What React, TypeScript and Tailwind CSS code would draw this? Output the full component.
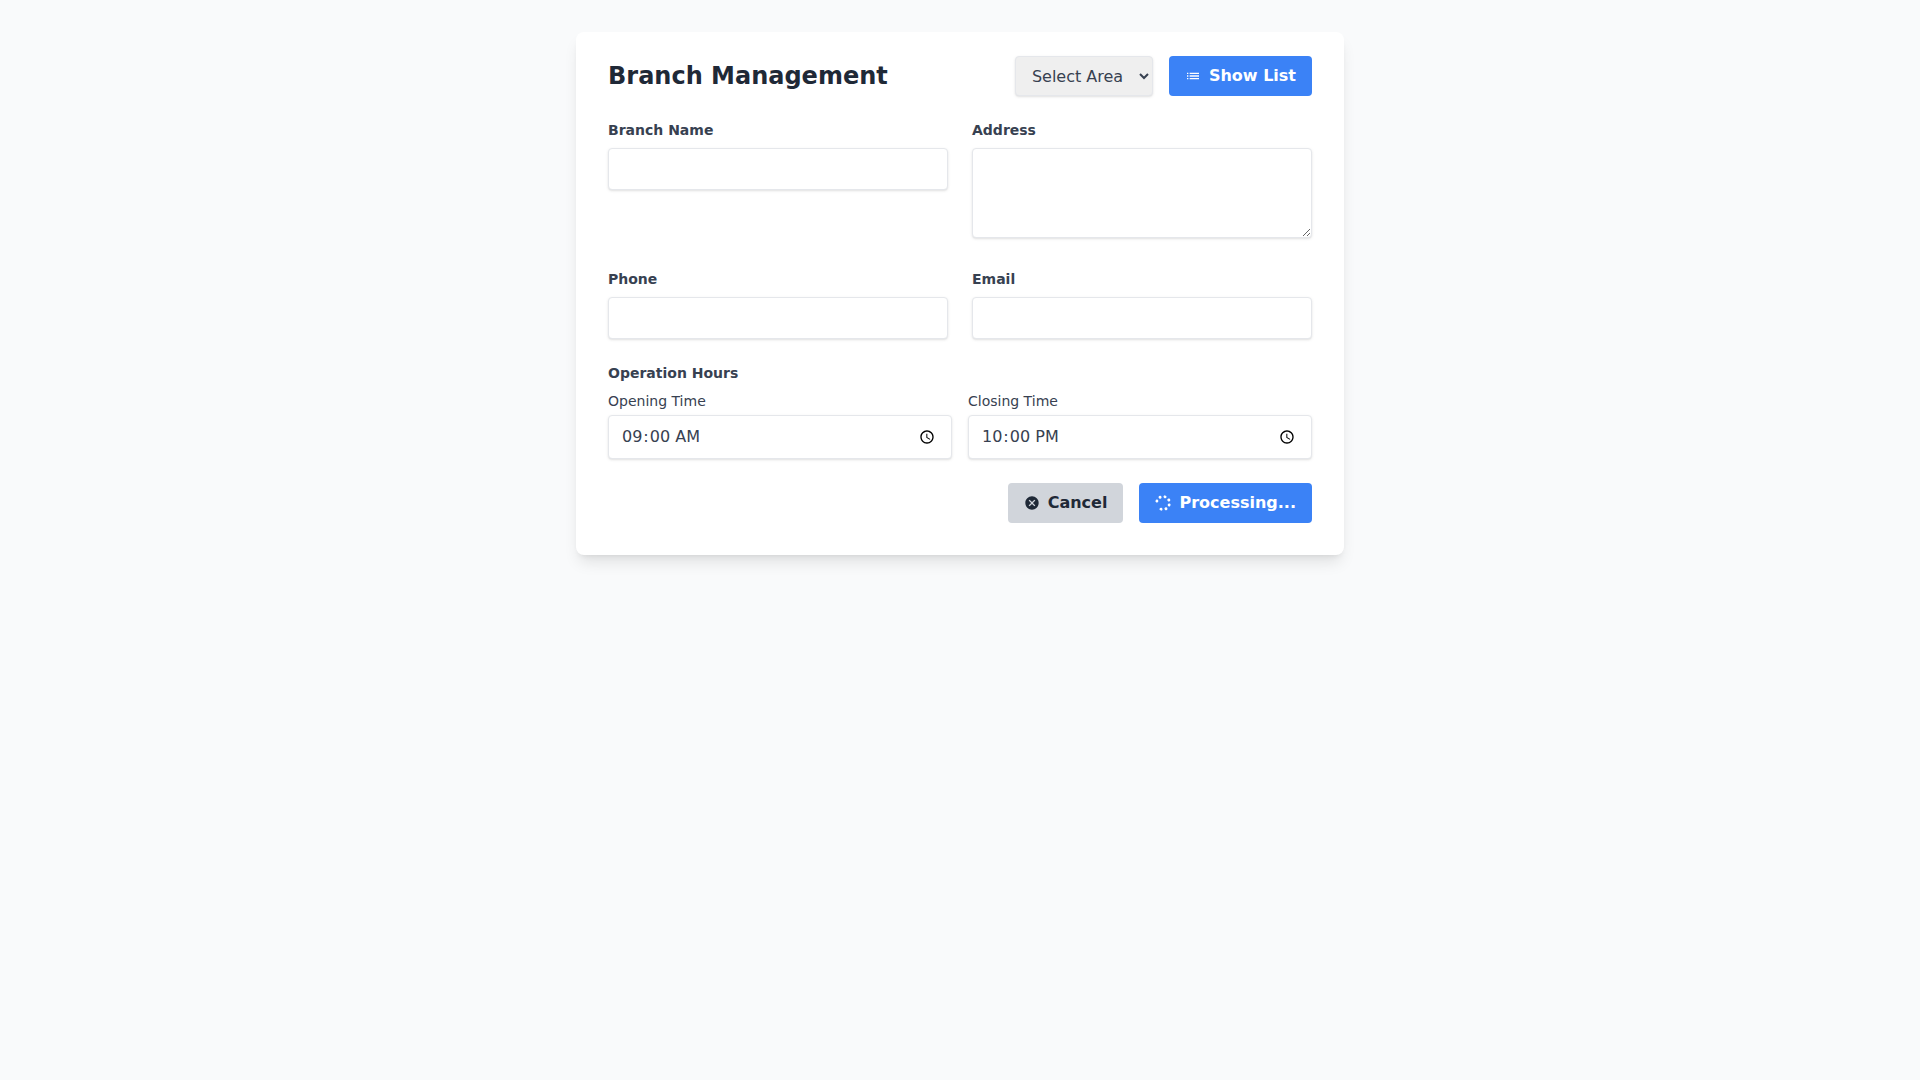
import React from "react";
import { FaSpinner } from "react-icons/fa";
import { MdCancel, MdList } from "react-icons/md";

const field =
  "shadow-sm border border-[#e5e7eb] rounded w-full py-2 px-3 text-[#374151] leading-6 bg-white";
const primaryButton = "flex items-center bg-[#3b82f6] text-white font-bold py-2 px-4 rounded";

function Field({ id, label, type }: { id: string; label: string; type: string }) {
  return (
    <div>
      <label htmlFor={id} className="block text-[#374151] text-sm font-bold mb-2">
        {label}
      </label>
      <input id={id} type={type} className={field} />
    </div>
  );
}

function TimeField({ id, label, value }: { id: string; label: string; value: string }) {
  return (
    <div className="flex-1">
      <label htmlFor={id} className="block text-[#374151] text-sm mb-1">
        {label}
      </label>
      <input id={id} type="time" defaultValue={value} className={`${field} block h-11`} />
    </div>
  );
}

export default function App() {
  return (
    <main className="min-h-screen bg-[#f9fafb] py-8 font-['DejaVu_Sans',sans-serif]">
      <section className="max-w-3xl mx-auto bg-white rounded-lg shadow-lg px-8 pt-6 pb-8">
        <header className="flex items-center justify-between mb-6">
          <h1 className="text-2xl font-bold text-[#1f2937]">Branch Management</h1>
          <div className="flex gap-4">
            <select
              aria-label="Select Area"
              className="shadow-sm border border-[#e5e7eb] rounded py-2 px-3 text-[#374151] leading-tight bg-[#efefef]"
            >
              <option>Select Area</option>
            </select>
            <button type="button" className={primaryButton}>
              <MdList className="mr-2" />
              Show List
            </button>
          </div>
        </header>
        <form>
          <div className="grid grid-cols-2 gap-6">
            <Field id="name" label="Branch Name" type="text" />
            <div>
              <label htmlFor="address" className="block text-[#374151] text-sm font-bold mb-2">
                Address
              </label>
              <textarea id="address" rows={3} className={field} />
            </div>
            <Field id="phone" label="Phone" type="tel" />
            <Field id="email" label="Email" type="email" />
          </div>
          <fieldset className="mt-6">
            <legend className="text-[#374151] text-sm font-bold mb-2">Operation Hours</legend>
            <div className="flex gap-4">
              <TimeField id="opening" label="Opening Time" value="09:00" />
              <TimeField id="closing" label="Closing Time" value="22:00" />
            </div>
          </fieldset>
          <div className="flex justify-end gap-4 mt-6">
            <button
              type="button"
              className="flex items-center bg-[#d1d5db] text-[#1f2937] font-bold py-2 px-4 rounded"
            >
              <MdCancel className="mr-2" />
              Cancel
            </button>
            <button type="button" className={primaryButton}>
              <FaSpinner className="mr-2 rotate-[198deg]" />
              Processing...
            </button>
          </div>
        </form>
      </section>
    </main>
  );
}
